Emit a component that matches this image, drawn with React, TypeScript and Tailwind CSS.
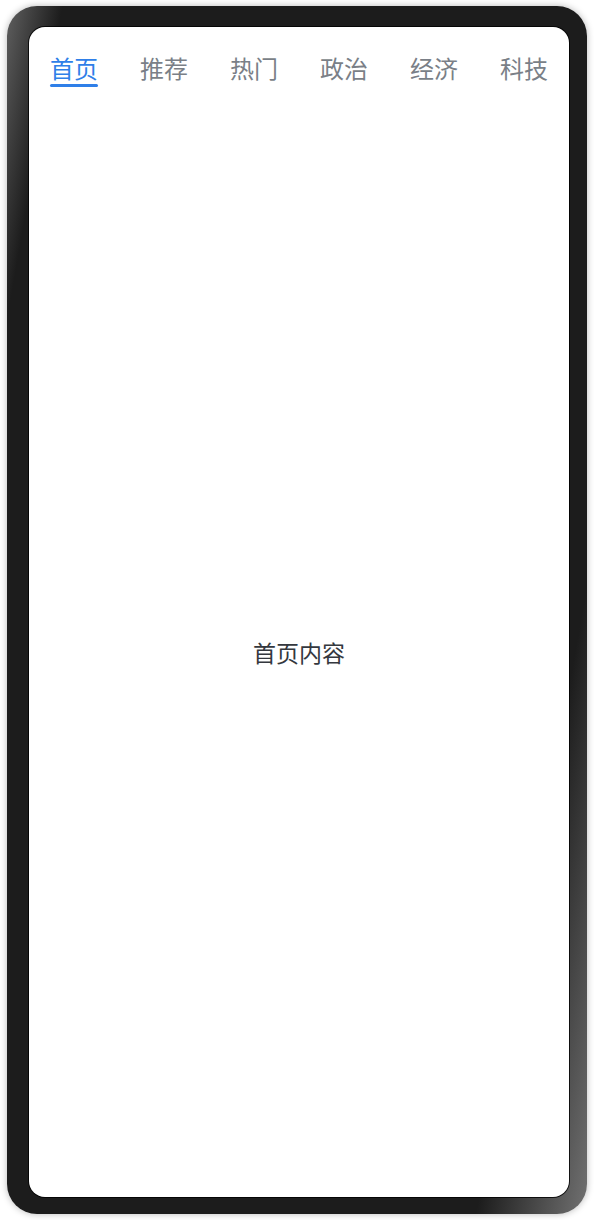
import React, { useState } from "react";

const TABS = ["首页", "推荐", "热门", "政治", "经济", "科技"];

export default function App() {
  const [active, setActive] = useState(0);

  return (
    <div
      className="w-[594px] h-[1220px] bg-white px-[7px] py-[6px]"
      style={{ fontFamily: '"Noto Sans CJK SC", "Noto Sans", sans-serif' }}
    >
      {/* Phone frame */}
      <div className="h-full rounded-[30px] pt-[21px] pl-[22px] pr-[18px] pb-[17px] bg-[linear-gradient(100deg,#5f5f5f_0%,#1c1c1c_7%,#1c1c1c_86%,#717171_100%)] shadow-[0_0_7px_rgba(0,0,0,0.28)]">
        {/* Screen */}
        <div className="h-full flex flex-col bg-white rounded-[16px] ring-1 ring-black/80 overflow-hidden">
          {/* Tab bar */}
          <div className="flex justify-around pt-[22px] h-[81px]">
            {TABS.map((tab, i) => (
              <button
                key={tab}
                onClick={() => setActive(i)}
                className={`relative h-[38px] text-[24px] leading-[34px] ${
                  active === i ? "text-[#2f7fe8]" : "text-[#7a7f87]"
                }`}
              >
                {tab}
                {active === i && (
                  <span className="absolute left-0 right-0 bottom-0 h-[3px] rounded-full bg-[#2f7fe8]" />
                )}
              </button>
            ))}
          </div>

          {/* Content */}
          <div className="flex-1 flex items-center justify-center">
            <span className="text-[23px] text-[#34383e]">{TABS[active]}内容</span>
          </div>
        </div>
      </div>
    </div>
  );
}
